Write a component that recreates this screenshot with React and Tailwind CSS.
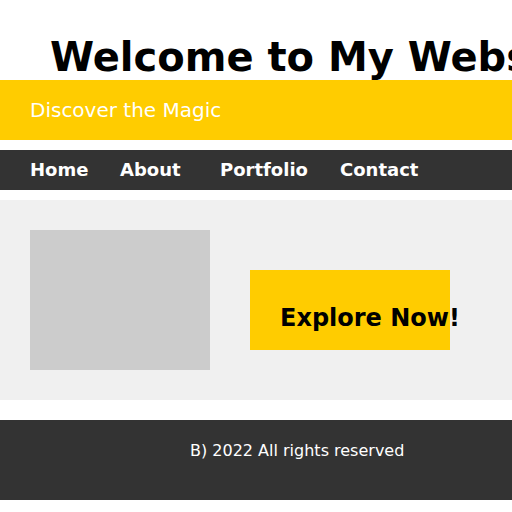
import React from 'react';

const navItems = [
  { label: 'Home', width: 'w-[90px]' },
  { label: 'About', width: 'w-[100px]' },
  { label: 'Portfolio', width: 'w-[120px]' },
  { label: 'Contact', width: 'w-[120px]' },
];

export default function App() {
  return (
    <div className="w-[512px] h-[512px] overflow-hidden bg-white font-['DejaVu_Sans',sans-serif]">
      <header className="h-[80px] pl-[50px] pt-[34px]">
        <h1 className="text-[40px] font-bold leading-[47px] text-black whitespace-nowrap">
          Welcome to My Website
        </h1>
      </header>

      <div className="h-[60px] bg-[#ffcc00] flex items-center pl-[30px]">
        <p className="text-[20px] leading-[20px] text-white">Discover the Magic</p>
      </div>

      <nav className="mt-[10px] h-[40px] bg-[#333333] flex items-center pl-[30px]">
        {navItems.map((item) => (
          <a key={item.label} className={`${item.width} text-[18px] leading-[18px] font-bold text-white`}>
            {item.label}
          </a>
        ))}
      </nav>

      <section className="mt-[10px] h-[200px] bg-[#f0f0f0] flex items-start p-[30px] gap-[40px]">
        <div className="w-[180px] h-[140px] bg-[#cccccc] shrink-0" />
        <button className="mt-[40px] w-[200px] h-[80px] shrink-0 bg-[#ffcc00] text-left pl-[30px] pt-[16px] self-start">
          <span className="block text-[24px] leading-normal font-bold text-black whitespace-nowrap">
            Explore Now!
          </span>
        </button>
      </section>

      <footer className="mt-[20px] h-[80px] bg-[#333333] pl-[190px] pt-[19px]">
        <p className="text-[16px] leading-normal text-white">B) 2022 All rights reserved</p>
      </footer>
    </div>
  );
}
